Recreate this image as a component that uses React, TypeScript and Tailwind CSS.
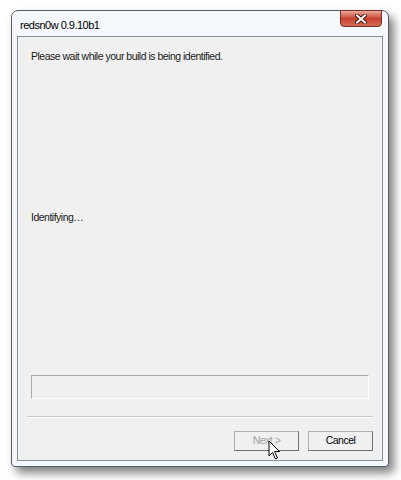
import React from "react";

const font = { fontFamily: '"Liberation Sans", Arial, sans-serif' };

function Cursor() {
  return (
    <svg width="14" height="21" viewBox="0 0 14 21" className="absolute left-[33px] top-[8px]">
      <path d="M1 1 L1 16 L4.5 12.5 L7.5 19 L9.5 18 L6.5 11.5 L11.5 11.5 Z" fill="#fff" stroke="#000" strokeWidth="1" strokeLinejoin="miter" />
    </svg>
  );
}

function CloseX() {
  return (
    <svg width="12" height="10" viewBox="0 0 12 10">
      <path d="M2 1.5 L10 8.5 M10 1.5 L2 8.5" stroke="#4a1208" strokeWidth="4" strokeLinecap="square" />
      <path d="M2 1.5 L10 8.5 M10 1.5 L2 8.5" stroke="#fff" strokeWidth="2" strokeLinecap="square" />
    </svg>
  );
}

export default function App() {
  return (
    <div className="w-[401px] h-[480px] bg-white overflow-hidden text-[#1a1a1a]" style={font}>
      <div className="ml-[11px] mt-[10px] w-[378px] h-[457px] flex flex-col rounded-t-[7px] rounded-b-[4px] border border-[#555b63] bg-[#f4f7fc] shadow-[5px_6px_10px_rgba(0,0,0,0.5)]">
        {/* title bar */}
        <div className="h-[25px] flex items-start justify-between pl-[8px] pr-[6px]">
          <span className="text-[11px] tracking-[-0.5px] mt-[6px] text-black">redsn0w 0.9.10b1</span>
          <div className="w-[42px] h-[17px] -mt-[1px] rounded-b-[4px] border border-[#7a2c22] bg-gradient-to-b from-[#e9a99d] via-[#c8422f] to-[#d36b55] flex items-center justify-center">
            <CloseX />
          </div>
        </div>
        {/* client area */}
        <div className="flex-1 mx-[5px] mb-[5px] border border-[#8a8f96] bg-[#f0f0f0] flex flex-col text-[10.5px] tracking-[-0.5px]">
          <div className="pl-[13px] pt-[12px]">Please wait while your build is being identified.</div>
          <div className="pl-[13px] mt-[145px]">Identifying…</div>
          <div className="mt-auto mx-[13px] h-[24px] border-t border-l border-[#a8a8a8] border-b border-r border-b-white border-r-white bg-[#f0f0f0]" />
          <div className="mt-[17px] mx-[9px] h-[2px] border-t border-[#c8c8c8] border-b border-b-white" />
          <div className="flex justify-end gap-[9px] mt-[13px] mr-[9px] mb-[9px]">
            <div className="relative w-[65px] h-[20px] border border-[#b0b0b0] border-r-[#707070] border-b-[#707070] bg-[#f0f0f0] flex items-center justify-center text-[#a0a0a0]">
              Next &gt;
              <Cursor />
            </div>
            <div className="w-[65px] h-[20px] border border-[#b0b0b0] border-r-[#707070] border-b-[#707070] bg-[#f0f0f0] flex items-center justify-center text-black">
              Cancel
            </div>
          </div>
        </div>
      </div>
    </div>
  );
}
